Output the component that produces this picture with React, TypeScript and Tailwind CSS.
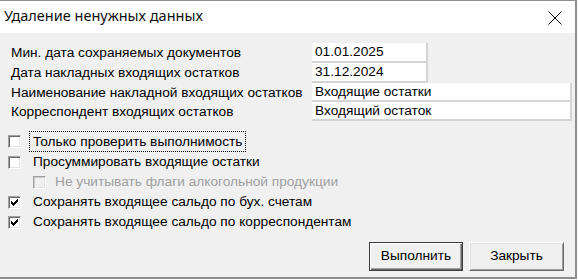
import React from 'react'

const fields = [
    { label: 'Мин. дата сохраняемых документов', value: '01.01.2025', wide: false, h: 'h-[20px]' },
    { label: 'Дата накладных входящих остатков', value: '31.12.2024', wide: false, h: 'h-[20px]' },
    { label: 'Наименование накладной входящих остатков', value: 'Входящие остатки', wide: true, h: 'h-[19px]' },
    { label: 'Корреспондент входящих остатков', value: 'Входящий остаток', wide: true, h: 'h-[19px]' },
]

const options = [
    { text: 'Только проверить выполнимость', checked: false, focused: true, h: 'h-[21px]' },
    { text: 'Просуммировать входящие остатки', checked: false, h: 'h-[20px]' },
    { text: 'Не учитывать флаги алкогольной продукции', checked: false, disabled: true, h: 'h-[20px]' },
    { text: 'Сохранять входящее сальдо по бух. счетам', checked: true, h: 'h-[20px]' },
    { text: 'Сохранять входящее сальдо по корреспондентам', checked: true, h: 'h-[20px]' },
]

function CheckMark() {
    return (
        <svg width="7" height="7" viewBox="0 0 7 7" shapeRendering="crispEdges" className="absolute left-[2px] top-[2px]">
            <path
                d="M6 0h1v1H6zM5 1h2v1H5zM0 2h1v1H0zM4 2h3v1H4zM0 3h2v1H0zM3 3h3v1H3zM0 4h5v1H0zM1 5h3v1H1zM2 6h1v1H2z"
                fill="#000"
            />
        </svg>
    )
}

function CheckBox({ checked, disabled }: { checked: boolean; disabled?: boolean }) {
    return (
        <div
            className={`relative w-[13px] h-[13px] shrink-0 border border-t-[#a0a0a0] border-l-[#a0a0a0] border-b-white border-r-white ${
                disabled
                    ? 'bg-[#f0f0f0] shadow-[inset_1px_1px_0_#c8c8c8,inset_-1px_-1px_0_#e3e3e3]'
                    : 'bg-white shadow-[inset_1px_1px_0_#696969,inset_-1px_-1px_0_#e3e3e3]'
            }`}
        >
            {checked && <CheckMark />}
        </div>
    )
}

export default function App() {
    return (
        <div className="w-[578px] h-[280px] bg-white text-[13.7px] text-black font-['Liberation_Sans',Arial,sans-serif]">
            <div className="w-[577px] h-[279px] flex flex-col border-t border-r-2 border-b-2 border-[#8e8e8e]">
                {/* title bar */}
                <div className="h-[32px] shrink-0 bg-white flex items-center justify-between pl-[4px] pr-[13px]">
                    <span className="text-[14.5px] font-['Noto_Sans',sans-serif] text-[#111] pb-[2px]">Удаление ненужных данных</span>
                    <svg width="14" height="14" viewBox="0 0 14 14" className="mt-[1px]">
                        <path d="M0.5 0.5L13.5 13.5M13.5 0.5L0.5 13.5" stroke="#000" strokeWidth="1" />
                    </svg>
                </div>

                {/* body */}
                <div className="flex-1 bg-[#f0f0f0] flex flex-col pt-[10px]">
                    <div className="flex flex-col pl-[11px]">
                        {fields.map((f) => (
                            <div key={f.label} className={`flex items-center ${f.h}`}>
                                <span className="w-[301px] shrink-0 leading-none whitespace-nowrap">{f.label}</span>
                                <div
                                    className={`h-full flex items-center pl-[3px] bg-white border-r-2 border-b-2 border-[#d4d4d4] leading-none ${
                                        f.wide ? 'w-[260px]' : 'w-[116px]'
                                    }`}
                                >
                                    {f.value}
                                </div>
                            </div>
                        ))}
                    </div>

                    <div className="flex flex-col pl-[8px] mt-[10px]">
                        {options.map((o) => (
                            <div key={o.text} className={`flex items-center ${o.h} ${o.disabled ? 'pl-[25px]' : ''}`}>
                                <CheckBox checked={o.checked} disabled={o.disabled} />
                                <span
                                    className={`leading-none whitespace-nowrap ${o.disabled ? 'ml-[9px] text-[#a0a0a0]' : 'ml-[12px]'} ${
                                        o.focused ? 'outline outline-1 outline-dotted outline-black outline-offset-[3px]' : ''
                                    }`}
                                >
                                    {o.text}
                                </span>
                            </div>
                        ))}
                    </div>

                    <div className="flex justify-end gap-[6px] pr-[11px] mt-[10px]">
                        <button className="w-[94px] h-[29px] bg-[#f0f0f0] border border-[#3c3c3c] shadow-[inset_1px_1px_0_#ffffff,inset_-1px_-1px_0_#696969,inset_-2px_-2px_0_#a0a0a0]">
                            Выполнить
                        </button>
                        <button className="w-[95px] h-[29px] bg-[#f0f0f0] border border-t-white border-l-white border-b-[#696969] border-r-[#696969] shadow-[inset_1px_1px_0_#e3e3e3,inset_-1px_-1px_0_#a0a0a0]">
                            Закрыть
                        </button>
                    </div>
                </div>
            </div>
        </div>
    )
}
